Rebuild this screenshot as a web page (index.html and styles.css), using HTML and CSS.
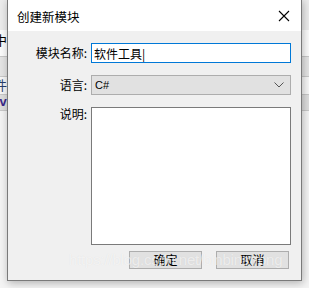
FILE: index.html
```html
<!DOCTYPE html>
<html lang="zh-CN">
<head>
    <meta charset="UTF-8">
    <title>创建新模块</title>
    <link rel="stylesheet" href="styles.css">
</head>
<body>

    <div class="app">
        <div class="app-row row-top"></div>
        <div class="app-row row-menu"><span class="cut">中</span></div>
        <div class="app-row row-tool"></div>
        <div class="app-row row-file"><span class="cut blue">件</span></div>
        <div class="app-row row-tab"><span class="cut purple">lv</span></div>
        <div class="app-row row-rest"></div>
    </div>

    <div class="dialog">
        <div class="titlebar">
            <span class="title">创建新模块</span>
            <svg class="close" width="12" height="12" viewBox="0 0 12 12">
                <path d="M1 1 L11 11 M11 1 L1 11" stroke="#000" stroke-width="1.1" fill="none"/>
            </svg>
        </div>

        <div class="content">
            <form class="fields">
                <label for="name">模块名称:</label>
                <input type="text" id="name" class="field focused" value="软件工具|">

                <label for="lang">语言:</label>
                <div class="select" id="lang">
                    <span>C#</span>
                    <svg width="10" height="6" viewBox="0 0 10 6">
                        <path d="M0.5 0.5 L5 5 L9.5 0.5" stroke="#555" stroke-width="1" fill="none"/>
                    </svg>
                </div>

                <label for="desc" class="top">说明:</label>
                <textarea id="desc" class="field area"></textarea>
            </form>

            <div class="buttons">
                <button type="button">确定</button>
                <button type="button">取消</button>
            </div>
        </div>

        <div class="watermark">https://blog.csdn.net/binbinstrong</div>
    </div>

</body>
</html>
```

FILE: styles.css
```css
body {
    margin: 0;
    width: 309px;
    height: 288px;
    overflow: hidden;
    position: relative;
    font-family: "Noto Sans CJK SC", "Liberation Sans", sans-serif;
    font-size: 12px;
    color: #000;
    background: #f4f4f4;
}

/* the app window behind the dialog */
.app {
    display: flex;
    flex-direction: column;
}

.app-row {
    position: relative;
    border-bottom: 1px solid #c8c8c8;
}

.row-top {
    height: 30px;
    background: #ececec;
    border-bottom: none;
}

.row-menu {
    height: 26px;
    background: #fbfbfb;
}

.row-tool {
    height: 19px;
    background: #e4e4e4;
}

.row-file {
    height: 17px;
    background: #f7f7f7;
}

.row-tab {
    height: 15px;
    background: #dedede;
}

.row-rest {
    height: 180px;
    background: #f4f4f4;
    border-bottom: none;
}

.cut {
    position: absolute;
    left: -6px;
    top: 2px;
    font-size: 13px;
    line-height: 16px;
}

.cut.blue {
    color: #2a3d6a;
    top: 0;
}

.cut.purple {
    color: #3b2a8a;
    font-weight: bold;
    font-family: "Liberation Sans", sans-serif;
    left: -4px;
    top: -1px;
}

/* dialog window */
.dialog {
    position: absolute;
    left: 7px;
    top: -1px;
    width: 293px;
    height: 280px;
    border: 1px solid #7a7a7a;
    background: #f0f0f0;
    box-shadow: 1px 2px 8px rgba(0, 0, 0, 0.28);
    display: flex;
    flex-direction: column;
}

.titlebar {
    height: 31px;
    background: #fff;
    display: flex;
    align-items: center;
    justify-content: space-between;
    padding: 0 11px 0 9px;
}

.title {
    font-size: 12.5px;
    margin-top: 1px;
}

.close {
    margin-top: 1px;
}

.content {
    padding-top: 12px;
}

.fields {
    display: grid;
    grid-template-columns: 79px 200px;
    grid-template-rows: 20px 20px 138px;
    column-gap: 4px;
    row-gap: 12px;
    margin: 0;
}

label {
    text-align: right;
    align-self: center;
    font-size: 12px;
    line-height: 16px;
}

label.top {
    align-self: start;
    margin-top: -1px;
}

.field {
    box-sizing: border-box;
    width: 200px;
    margin: 0;
    background: #fff;
    font-family: "Noto Sans CJK SC", sans-serif;
    font-size: 12px;
    padding: 0 2px;
    outline: none;
    resize: none;
}

.focused {
    border: 1px solid #0078d7;
    height: 20px;
    line-height: 18px;
}

.area {
    border: 1px solid #7a7a7a;
    height: 138px;
}

.select {
    box-sizing: border-box;
    height: 20px;
    background: #e1e1e1;
    border: 1px solid #adadad;
    display: flex;
    align-items: center;
    justify-content: space-between;
    padding: 0 6px 0 3px;
    font-family: "Liberation Sans", sans-serif;
    font-size: 11px;
}

.buttons {
    display: flex;
    justify-content: flex-end;
    gap: 14px;
    padding: 6px 12px 0 0;
}

button {
    width: 73px;
    height: 18px;
    padding: 0;
    background: #e1e1e1;
    border: 1px solid #adadad;
    font-family: "Noto Sans CJK SC", sans-serif;
    font-size: 12px;
    line-height: 16px;
    color: #000;
}

.watermark {
    position: absolute;
    left: 61px;
    top: 251px;
    font-family: "Liberation Sans", sans-serif;
    font-size: 15px;
    letter-spacing: -0.2px;
    color: rgba(255, 255, 255, 0.6);
    text-shadow: 0 0 1px rgba(0, 0, 0, 0.08);
    white-space: nowrap;
    pointer-events: none;
}
```
